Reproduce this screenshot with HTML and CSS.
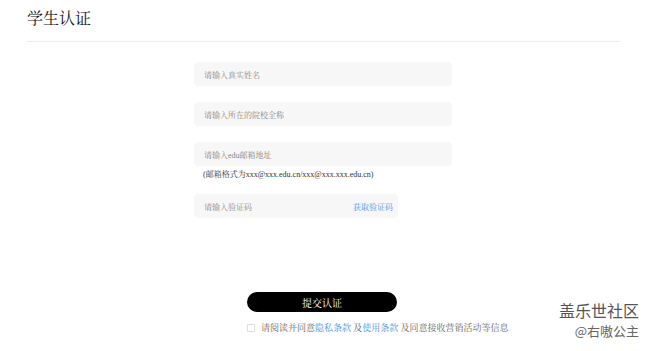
FILE: index.html
```html
<!DOCTYPE html>
<html lang="zh">
<head>
<meta charset="utf-8">
<link rel="stylesheet" href="styles.css">
</head>
<body>
<div class="page">
  <header class="header"><h1 class="title">学生认证</h1></header>
  <main class="form">
    <div class="field"><span class="ph">请输入真实姓名</span></div>
    <div class="field"><span class="ph">请输入所在的院校全称</span></div>
    <div class="field field-last"><span class="ph">请输入edu邮箱地址</span></div>
    <div class="hint">(邮箱格式为xxx@xxx.edu.cn/xxx@xxx.xxx.edu.cn)</div>
    <div class="field code"><span class="ph">请输入验证码</span><span class="get">获取验证码</span></div>
    <button class="submit">提交认证</button>
    <div class="agree"><span class="box"></span><span class="atext">请阅读并同意<a class="link">隐私条款</a> 及<a class="link">使用条款</a> 及同意接收营销活动等信息</span></div>
  </main>
  <div class="mark"><div class="mark1">盖乐世社区</div><div class="mark2">@右嗷公主</div></div>
</div>
</body>
</html>
```
FILE: styles.css
```css
html, body { margin: 0; padding: 0; background: #fff; }
body { font-family: "Liberation Serif", "Noto Serif CJK SC", serif; color: #333; }
.page { position: relative; width: 650px; height: 351px; overflow: hidden; }
.header { margin: 0 30px 0 27px; height: 41px; border-bottom: 1px solid #ececec; display: flex; align-items: center; }
.title { margin: 0; font-size: 16px; font-weight: normal; color: #111; line-height: 1; padding-bottom: 4px; }
.form { margin-left: 194px; padding-top: 20px; display: flex; flex-direction: column; align-items: flex-start; }
.field { width: 258px; height: 24px; background: #f7f7f7; border-radius: 4px; display: flex; align-items: center; padding: 0 10px; box-sizing: border-box; margin-bottom: 16px; }
.field-last { margin-bottom: 0; }
.ph { font-size: 8px; color: #888; }
.hint { font-size: 8px; color: #333; margin: 2px 0 0 9px; height: 14px; }
.code { width: 204px; margin-top: 12px; justify-content: space-between; padding-right: 5px; }
.get { font-size: 8px; color: #4a90e2; }
.submit { margin: 58px 0 0 53px; width: 150px; height: 20px; border: none; border-radius: 10px; background: #000; color: #fff; font-family: inherit; font-size: 10px; padding: 0; }
.agree { margin: 9px 0 0 53px; display: flex; align-items: center; }
.box { width: 6px; height: 6px; border: 1px solid #ddd; border-radius: 1px; margin-right: 6px; }
.atext { font-size: 9px; color: #666; }
.link { color: #4a90e2; }
.mark { position: absolute; right: 11px; top: 300px; text-align: right; font-family: "Noto Sans CJK SC", sans-serif; color: #555; }
.mark1 { font-size: 16px; line-height: 20px; letter-spacing: 0; }
.mark2 { font-size: 13px; line-height: 18px; color: #666; margin-top: 2px; }
```
